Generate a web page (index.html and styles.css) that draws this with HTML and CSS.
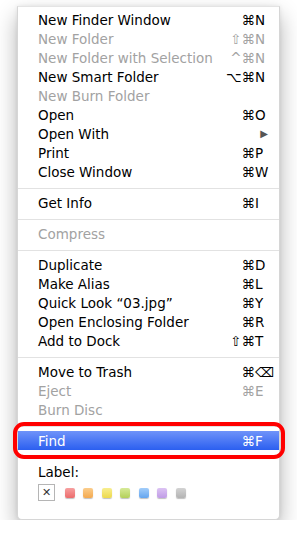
FILE: index.html
```html
<!DOCTYPE html>
<html lang="en">
<head>
    <meta charset="UTF-8">
    <meta name="viewport" content="width=device-width, initial-scale=1.0">
    <title>File Menu</title>
    <link rel="stylesheet" href="styles.css">
</head>
<body>

<div class="menu">
    <div class="item"><span class="name">New Finder Window</span><span class="mods">⌘</span><span class="key">N</span></div>
    <div class="item off"><span class="name">New Folder</span><span class="mods">⇧⌘</span><span class="key">N</span></div>
    <div class="item off"><span class="name">New Folder with Selection</span><span class="mods">^⌘</span><span class="key">N</span></div>
    <div class="item"><span class="name">New Smart Folder</span><span class="mods">⌥⌘</span><span class="key">N</span></div>
    <div class="item off"><span class="name">New Burn Folder</span></div>
    <div class="item"><span class="name">Open</span><span class="mods">⌘</span><span class="key">O</span></div>
    <div class="item"><span class="name">Open With</span><span class="arrow">▶</span></div>
    <div class="item"><span class="name">Print</span><span class="mods">⌘</span><span class="key">P</span></div>
    <div class="item"><span class="name">Close Window</span><span class="mods">⌘</span><span class="key">W</span></div>

    <div class="sep"></div>
    <div class="item"><span class="name">Get Info</span><span class="mods">⌘</span><span class="key">I</span></div>

    <div class="sep"></div>
    <div class="item off"><span class="name">Compress</span></div>

    <div class="sep"></div>
    <div class="item"><span class="name">Duplicate</span><span class="mods">⌘</span><span class="key">D</span></div>
    <div class="item"><span class="name">Make Alias</span><span class="mods">⌘</span><span class="key">L</span></div>
    <div class="item"><span class="name">Quick Look “03.jpg”</span><span class="mods">⌘</span><span class="key">Y</span></div>
    <div class="item"><span class="name">Open Enclosing Folder</span><span class="mods">⌘</span><span class="key">R</span></div>
    <div class="item"><span class="name">Add to Dock</span><span class="mods">⇧⌘</span><span class="key">T</span></div>

    <div class="sep"></div>
    <div class="item"><span class="name">Move to Trash</span><span class="mods">⌘</span><span class="key">⌫</span></div>
    <div class="item off"><span class="name">Eject</span><span class="mods">⌘</span><span class="key">E</span></div>
    <div class="item off"><span class="name">Burn Disc</span></div>

    <div class="sep"></div>
    <div class="item active"><span class="name">Find</span><span class="mods">⌘</span><span class="key">F</span><span class="callout"></span></div>

    <div class="sep"></div>
    <div class="item"><span class="name">Label:</span></div>
    <div class="labels">
        <span class="none">✕</span>
        <span class="dot red"></span>
        <span class="dot orange"></span>
        <span class="dot yellow"></span>
        <span class="dot green"></span>
        <span class="dot blue"></span>
        <span class="dot purple"></span>
        <span class="dot gray"></span>
    </div>
</div>

</body>
</html>
```

FILE: styles.css
```css
body {
    margin: 0;
    background-color: white;
    font-family: "DejaVu Sans", sans-serif;
    font-size: 13.5px;
    color: black;
}

.menu {
    width: 261px;
    margin: 6px 0 0 17px;
    padding: 3px 0 18px;
    background-color: white;
    border: 1px solid #d6d6d6;
    border-top-color: #e4e4e4;
    border-radius: 0 0 5px 5px;
    box-shadow: 0 10px 22px rgba(0, 0, 0, 0.3), 0 0 4px rgba(0, 0, 0, 0.08);
}

.item {
    position: relative;
    display: flex;
    align-items: center;
    height: 19px;
    padding: 0 12px 0 20px;
}

.name {
    flex: 1;
    white-space: nowrap;
}

.mods {
    text-align: right;
}

.key {
    width: 12px;
}

.arrow {
    font-size: 10px;
    color: #555;
    margin-right: -1px;
}

.off {
    color: #a2a2a2;
}

.active {
    color: white;
    background: linear-gradient(#6f93f9, #2b5ff0);
}

.callout {
    position: absolute;
    top: -9px;
    bottom: -9px;
    left: -5px;
    right: -6px;
    border: 4px solid #f00;
    border-radius: 11px;
}

.sep {
    height: 12px;
    background: linear-gradient(transparent 7px, #e2e2e2 7px, #e2e2e2 8px, transparent 8px);
}

.labels {
    display: flex;
    align-items: center;
    gap: 8.5px;
    padding: 3px 0 0 20px;
}

.none {
    box-sizing: border-box;
    width: 17px;
    height: 17px;
    border: 1px solid #b5b5b5;
    font-size: 11px;
    line-height: 15px;
    text-align: center;
    color: #333;
    margin-right: 1px;
}

.dot {
    width: 10px;
    height: 10px;
    border-radius: 2px;
    box-shadow: 0 1px 1px rgba(0, 0, 0, 0.25);
}

.red { background: linear-gradient(#f7a0a0, #ec6c6c); }
.orange { background: linear-gradient(#fbcd8c, #f3a94f); }
.yellow { background: linear-gradient(#f8ee90, #ecd94c); }
.green { background: linear-gradient(#d6ea98, #b3d05a); }
.blue { background: linear-gradient(#a2cdfa, #64a5ef); }
.purple { background: linear-gradient(#dcc3f3, #c09ce6); }
.gray { background: linear-gradient(#d3d3d3, #b3b3b3); }
```
